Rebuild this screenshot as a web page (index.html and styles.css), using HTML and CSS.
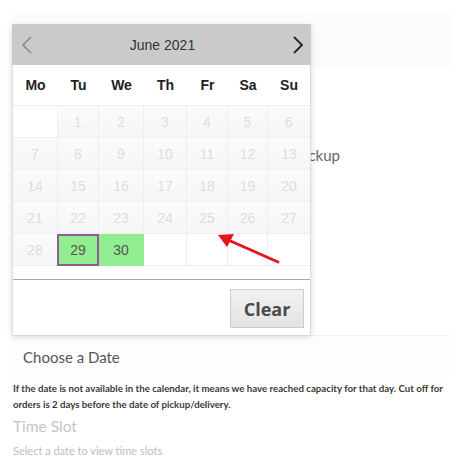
FILE: index.html
```html
<!DOCTYPE html>
<html>
<head>
<meta charset="utf-8">
<link rel="stylesheet" href="styles.css">
</head>
<body>
<div class="page">
  <div class="field-top"></div>
  <div class="pickup">Local Pickup</div>
  <div class="date-field">Choose a Date</div>
  <p class="note">If the date is not available in the calendar, it means we have reached capacity for that day. Cut off for<br>orders is 2 days before the date of pickup/delivery.</p>
  <div class="slot-title">Time Slot</div>
  <div class="slot-hint">Select a date to view time slots</div>

  <div class="calendar">
    <div class="cal-head">
      <svg class="nav prev" width="11" height="18" viewBox="0 0 11 18"><path d="M10 1 L2 9 L10 17" fill="none" stroke="#8a8a8a" stroke-width="1.6"/></svg>
      <span class="month">June 2021</span>
      <svg class="nav next" width="11" height="18" viewBox="0 0 11 18"><path d="M1 1 L9 9 L1 17" fill="none" stroke="#222" stroke-width="1.8"/></svg>
    </div>
    <div class="grid">
      <div class="wd">Mo</div><div class="wd">Tu</div><div class="wd">We</div><div class="wd">Th</div><div class="wd">Fr</div><div class="wd">Sa</div><div class="wd">Su</div>
      <div class="d empty"></div><div class="d">1</div><div class="d">2</div><div class="d">3</div><div class="d">4</div><div class="d">5</div><div class="d">6</div>
      <div class="d">7</div><div class="d">8</div><div class="d">9</div><div class="d">10</div><div class="d">11</div><div class="d">12</div><div class="d">13</div>
      <div class="d">14</div><div class="d">15</div><div class="d">16</div><div class="d">17</div><div class="d">18</div><div class="d">19</div><div class="d">20</div>
      <div class="d">21</div><div class="d">22</div><div class="d">23</div><div class="d">24</div><div class="d">25</div><div class="d">26</div><div class="d">27</div>
      <div class="d">28</div><div class="d avail sel">29</div><div class="d avail">30</div><div class="d empty"></div><div class="d empty"></div><div class="d empty"></div><div class="d empty"></div>
    </div>
    <div class="spacer"></div>
    <div class="cal-foot">
      <button class="clear">Clear</button>
    </div>
  </div>

  <svg class="arrow" width="70" height="40" viewBox="0 0 70 40">
    <line x1="66" y1="35" x2="14" y2="12" stroke="#e8141c" stroke-width="3" stroke-linecap="round"/>
    <polygon points="6,8 22,7 15,20" fill="#e8141c"/>
  </svg>
</div>
</body>
</html>
```

FILE: styles.css
```css
html, body {
  margin: 0;
  padding: 0;
  background: #fff;
}
.page {
  position: relative;
  width: 463px;
  height: 471px;
  padding: 12px 13px 0 12px;
  box-sizing: border-box;
  font-family: "Lato", "Open Sans", sans-serif;
}
.field-top {
  height: 57px;
  background: #fcfcfc;
}
.pickup {
  width: 328px;
  text-align: right;
  margin-top: 77px;
  height: 18px;
  line-height: 18px;
  font-size: 15px;
  color: #666;
}
.date-field {
  margin-top: 171px;
  height: 43px;
  box-sizing: border-box;
  padding-left: 11px;
  line-height: 43px;
  font-size: 15px;
  color: #555;
  background: #fdfdfd;
  border-top: 1px solid #f0f0f0;
}
.note {
  margin: 2px 0 0 1px;
  font-size: 9.7px;
  line-height: 16px;
  font-weight: 700;
  color: #3a3a3a;
}
.slot-title {
  margin: 2px 0 0 1px;
  font-size: 15.5px;
  line-height: 24px;
  color: #c4c4c4;
}
.slot-hint {
  margin: 2px 0 0 1px;
  font-size: 11px;
  line-height: 22px;
  color: #bdbdbd;
}
.calendar {
  position: absolute;
  left: 12px;
  top: 24px;
  width: 299px;
  background: #fff;
  box-shadow: 0 2px 6px rgba(0,0,0,0.16);
  border-left: 1px solid #ddd;
  border-right: 1px solid #ddd;
  box-sizing: border-box;
  font-family: "Liberation Sans", Arial, sans-serif;
}
.cal-head {
  height: 41px;
  background: #cacaca;
  display: flex;
  align-items: center;
  justify-content: space-between;
  padding: 0 7px 0 9px;
  margin: 0 -1px;
}
.nav { display: block; }
.month {
  font-size: 14px;
  color: #333;
}
.grid {
  display: grid;
  grid-template-columns: 45px 41px 45px 43px 41px 40px 42px;
  grid-template-rows: 41px repeat(5, 32px);
}
.wd {
  display: flex;
  align-items: center;
  justify-content: center;
  font-weight: 700;
  font-size: 14px;
  color: #222;
  border-bottom: 1px solid #eee;
}
.d {
  display: flex;
  align-items: center;
  justify-content: center;
  font-size: 14px;
  color: #ddd;
  background: linear-gradient(#fbfbfb, #f6f6f6);
  border-right: 1px solid #eee;
  border-bottom: 1px solid #eee;
  box-sizing: border-box;
}
.d:nth-child(7n) { border-right: none; }
.d.empty { background: #fff; }
.d.avail {
  background: #90ee90;
  color: #555;
  border-color: #90ee90;
}
.d.sel {
  border: 2px solid #905d96;
  margin-left: -1px;
}
.spacer { height: 13px; }
.cal-foot {
  border-top: 1px solid #aaa;
  height: 56px;
  box-sizing: border-box;
  display: flex;
  justify-content: flex-end;
  align-items: flex-start;
  padding: 9px 6px 0 0;
}
.clear {
  width: 74px;
  height: 39px;
  border: 1px solid #ccc;
  background: linear-gradient(#f2f2f2, #e3e3e3);
  font-family: "Open Sans", "Liberation Sans", sans-serif;
  font-weight: 700;
  font-size: 18px;
  color: #4a4a4a;
  padding: 0;
}
.arrow {
  position: absolute;
  left: 212px;
  top: 227px;
}
```
